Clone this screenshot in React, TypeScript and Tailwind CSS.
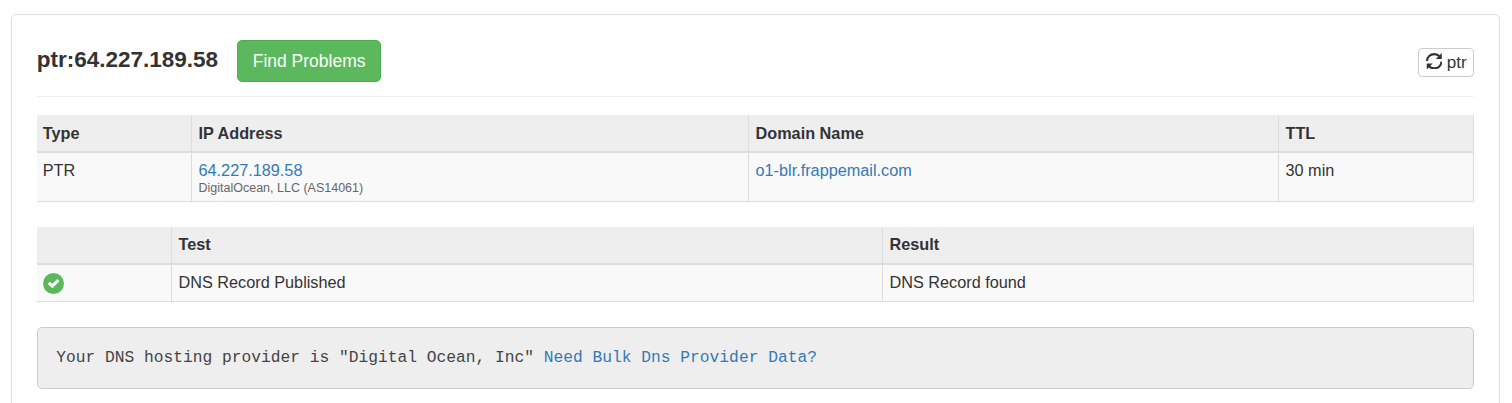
import type { ReactNode } from "react";

function RefreshIcon() {
  return (
    <svg viewBox="0 0 16 16" className="size-[16.5px] shrink-0" fill="none" aria-hidden="true">
      <path d="M1 7.8C1 4 4.2 1.1 8 1.1c2.2 0 4 .8 5.2 2.3" stroke="#333" strokeWidth="2" />
      <path d="M15.3 0v5.8H9.5z" fill="#333" />
      <path d="M15 8.2c0 3.8-3.2 6.7-7 6.7-2.2 0-4-.8-5.2-2.3" stroke="#333" strokeWidth="2" />
      <path d="M0.7 16v-5.8h5.8z" fill="#333" />
    </svg>
  );
}

function StatusOk() {
  return (
    <svg viewBox="0 0 21 21" className="block size-[21px]" role="img" aria-label="Passed">
      <circle cx="10.5" cy="10.5" r="10.5" fill="#5cb85c" />
      <path d="M5.8 9.8l3.5 3.3 6-6" fill="none" stroke="#fff" strokeWidth="3.1" />
    </svg>
  );
}

function Head({ children, className = "pt-px pb-0" }: { children?: ReactNode; className?: string }) {
  return (
    <th
      className={`h-[38px] border-r border-b-2 border-[#ddd] bg-[#eee] pr-1.5 pl-[6.75px] text-left font-bold first:pl-1.5 ${className}`}
    >
      {children}
    </th>
  );
}

function Cell({ children }: { children?: ReactNode }) {
  return (
    <td className="border-r border-b border-[#ddd] bg-[#f9f9f9] pt-1.5 pr-1.5 pb-0 pl-[6.75px] align-top leading-[23px] first:pl-1.5">
      {children}
    </td>
  );
}

const link = "text-[#337ab7]";

export default function App() {
  return (
    <div className="h-[403px] overflow-hidden bg-white pt-3.5 pr-3 pl-[11px] font-['Liberation_Sans',Arial,sans-serif] text-[16.25px] text-[#333]">
      <main className="h-[450px] rounded-[5px] border border-[#ddd] pt-[25px] pr-[25px] pl-[24.75px]">
        <header className="flex h-[57px] items-start border-b border-[#eee]">
          <h1 className="pt-[7px] text-[22.5px] leading-[26px] font-bold">ptr:64.227.189.58</h1>
          <button className="ml-[19px] h-[42px] w-36 rounded-[5px] border border-[#4cae4c] bg-[#5cb85c] pt-[2px] text-[17.5px] leading-none whitespace-nowrap text-white">
            Find Problems
          </button>
          <button className="mt-2 ml-auto flex h-[29px] w-14 items-center rounded-[4px] border border-[#ccc] bg-white pl-[6.5px] leading-none">
            <span className="mb-[3px]">
              <RefreshIcon />
            </span>
            <span className="ml-[4.75px] text-[17px]">ptr</span>
          </button>
        </header>

        <table className="mt-[18px] h-[87px] w-full table-fixed border-separate border-spacing-0">
          <colgroup>
            <col className="w-[155px]" />
            <col className="w-[557px]" />
            <col className="w-[530px]" />
            <col />
          </colgroup>
          <thead>
            <tr>
              <Head>Type</Head>
              <Head>IP Address</Head>
              <Head>Domain Name</Head>
              <Head>TTL</Head>
            </tr>
          </thead>
          <tbody>
            <tr className="h-[49px]">
              <Cell>PTR</Cell>
              <Cell>
                <a className={link}>64.227.189.58</a>
                <div className="text-[12.5px] leading-3 text-[#666]">DigitalOcean, LLC (AS14061)</div>
              </Cell>
              <Cell>
                <a className={link}>o1-blr.frappemail.com</a>
              </Cell>
              <Cell>30 min</Cell>
            </tr>
          </tbody>
        </table>

        <table className="mt-[25px] h-[75px] w-full table-fixed border-separate border-spacing-0">
          <colgroup>
            <col className="w-[135px]" />
            <col className="w-[711px]" />
            <col />
          </colgroup>
          <thead>
            <tr>
              <Head className="pt-0 pb-px" />
              <Head className="pt-0 pb-px">Test</Head>
              <Head className="pt-0 pb-px">Result</Head>
            </tr>
          </thead>
          <tbody>
            <tr className="h-[37px]">
              <Cell>
                <div className="pt-[2px]">
                  <StatusOk />
                </div>
              </Cell>
              <Cell>DNS Record Published</Cell>
              <Cell>DNS Record found</Cell>
            </tr>
          </tbody>
        </table>

        <p className="mt-[25px] flex h-[62px] items-center rounded-[5px] border border-[#ccc] bg-[#eee] pl-[18.5px] font-['Liberation_Mono','Courier_New',monospace] whitespace-pre text-[#444]">
          {'Your DNS hosting provider is "Digital Ocean, Inc" '}
          <a className={link}>Need Bulk Dns Provider Data?</a>
        </p>
      </main>
    </div>
  );
}
